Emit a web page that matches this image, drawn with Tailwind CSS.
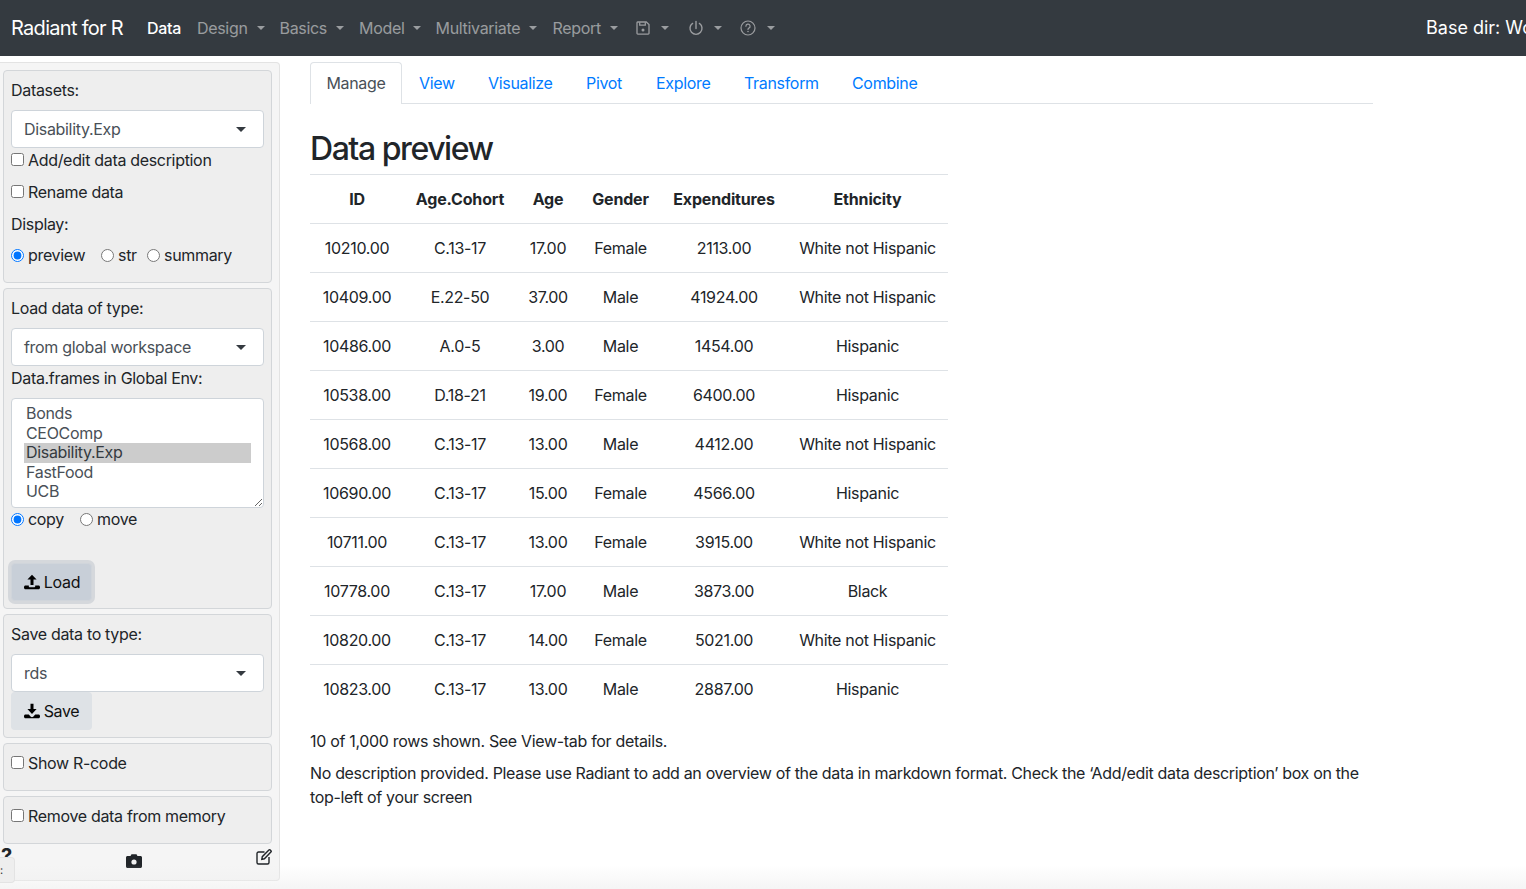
<!doctype html>
<html><head><meta charset="utf-8"><script src="https://cdn.jsdelivr.net/npm/@tailwindcss/browser@4"></script><title>Radiant for R</title></head>
<body class="w-[1526px] h-[889px] overflow-hidden bg-white text-[#212529] font-['Inter','Liberation_Sans',sans-serif] text-[16px] leading-6 tracking-[-0.32px] relative">
<nav class="h-14 bg-[#343a40] flex items-center pl-[11px] whitespace-nowrap overflow-hidden text-[16px] text-white/50">
  <span class="text-[20px] text-white w-[136px] tracking-[-0.7px]">Radiant for R</span>
  <span class="text-white font-medium w-[50px]">Data</span>
  <span class="flex items-center w-[82.5px]">Design<i class="ml-[9px] border-x-[4px] border-t-[4px] border-x-transparent border-t-white/50"></i></span>
  <span class="flex items-center w-[79.500px]">Basics<i class="ml-[9px] border-x-[4px] border-t-[4px] border-x-transparent border-t-white/50"></i></span>
  <span class="flex items-center w-[76.500px]">Model<i class="ml-[9px] border-x-[4px] border-t-[4px] border-x-transparent border-t-white/50"></i></span>
  <span class="flex items-center w-[117px]">Multivariate<i class="ml-[9px] border-x-[4px] border-t-[4px] border-x-transparent border-t-white/50"></i></span>
  <span class="flex items-center w-[83.500px]">Report<i class="ml-[9px] border-x-[4px] border-t-[4px] border-x-transparent border-t-white/50"></i></span>
  <span class="flex items-center w-[52px]"><svg class="w-[14px] h-4" viewBox="0 0 14 16" fill="none" stroke="#9a9c9f" stroke-width="1.3"><path d="M1.7 2h8.6L13 4.6v8.7a.8.8 0 0 1-.8.8H1.800a.8.8 0 0 1-.8-.8V2.800a.8.8 0 0 1 .7-.8z"/><path d="M3.700 2.200v3h5.600v-3"/><circle cx="7" cy="10" r="1.500" fill="#9a9c9f" stroke="none"/></svg><i class="ml-[11px] border-x-[4px] border-t-[4px] border-x-transparent border-t-white/50"></i></span>
  <span class="flex items-center w-[52px]"><svg class="w-4 h-4" viewBox="0 0 16 16" fill="none" stroke="#9a9c9f" stroke-width="1.400" stroke-linecap="round"><path d="M8 1.500v7"/><path d="M4.600 3.400a6 6 0 1 0 6.800 0"/></svg><i class="ml-[10px] border-x-[4px] border-t-[4px] border-x-transparent border-t-white/50"></i></span>
  <span class="flex items-center"><svg class="w-4 h-4" viewBox="0 0 16 16" fill="none" stroke="#9a9c9f" stroke-width="1.200"><circle cx="8" cy="8" r="7"/><path d="M5.900 6.200a2.100 2.100 0 1 1 3 1.900c-.6.300-.9.700-.9 1.400" stroke-linecap="round"/><circle cx="8" cy="11.500" r=".8" fill="#9a9c9f" stroke="none"/></svg><i class="ml-[11px] border-x-[4px] border-t-[4px] border-x-transparent border-t-white/50"></i></span>
  <span class="ml-auto text-[18px] text-white w-[100px] shrink-0 tracking-normal">Base dir: Workspace</span>
</nav>
<div class="flex items-start">
  <aside class="w-[280px] h-[819px] mt-[6px] shrink-0 bg-[#f5f5f5] border border-l-0 border-[#e3e3e3] rounded-r-[4px] pl-[3px] pr-[7px] pt-[7px] relative">
    <section class="h-[213px] bg-[#eeeeee] border border-[#d3d6d9] rounded-[4px] px-[7px] pt-[7px]">
      <p>Datasets:</p>
      <div class="mt-2 h-[38px] bg-white border border-[#ced4da] rounded-[4px] pl-3 pr-[17px] flex items-center justify-between text-[#495057]"><span>Disability.Exp</span><i class="border-x-[5px] border-t-[5px] border-x-transparent border-t-[#343a40]"></i></div>
      <label class="flex items-center gap-[4px] h-6"><input type="checkbox" class="w-[13px] h-[13px] -mt-[1px]">Add/edit data description</label>
      <label class="flex items-center gap-[4px] h-6 mt-2"><input type="checkbox" class="w-[13px] h-[13px] -mt-[1px]">Rename data</label>
      <p class="mt-2">Display:</p>
      <div class="flex items-center h-6 mt-[7px]">
        <label class="flex items-center gap-[4px] w-[90px]"><input type="radio" name="d" checked class="w-[13px] h-[13px]">preview</label>
        <label class="flex items-center gap-[4px] w-[46px]"><input type="radio" name="d" class="w-[13px] h-[13px]">str</label>
        <label class="flex items-center gap-[4px]"><input type="radio" name="d" class="w-[13px] h-[13px]">summary</label>
      </div>
    </section>
    <section class="mt-[5px] h-[321px] bg-[#eeeeee] border border-[#d3d6d9] rounded-[4px] px-[7px] pt-[7px]">
      <p>Load data of type:</p>
      <div class="mt-2 h-[38px] bg-white border border-[#ced4da] rounded-[4px] pl-3 pr-[17px] flex items-center justify-between text-[#495057]"><span>from global workspace</span><i class="border-x-[5px] border-t-[5px] border-x-transparent border-t-[#343a40]"></i></div>
      <p>Data.frames in Global Env:</p>
      <div class="relative mt-2 h-[110px] bg-white border border-[#ced4da] rounded-[4px] pl-3 pr-3 pt-[5.4px] text-[#495057] leading-[19.4px]">
        <p class="pl-[2px]">Bonds</p><p class="pl-[2px]">CEOComp</p><p class="pl-[2px] bg-[#cccccc] text-[#343a40]">Disability.Exp</p><p class="pl-[2px]">FastFood</p><p class="pl-[2px]">UCB</p>
        <svg class="absolute right-0 bottom-0 w-[9px] h-[9px]" viewBox="0 0 9 9" stroke="#666" stroke-width="1"><path d="M1 8 8 1M5 8l3-3"/></svg>
      </div>
      <div class="flex items-center h-6 -mt-[1px]">
        <label class="flex items-center gap-[4px] w-[69px]"><input type="radio" name="c" checked class="w-[13px] h-[13px]">copy</label>
        <label class="flex items-center gap-[4px]"><input type="radio" name="c" class="w-[13px] h-[13px]">move</label>
      </div>
      <button class="mt-8 w-[81px] h-[38px] pl-[1px] bg-[#c8cfd8] border border-[#d0d5db] rounded-[4px] ring-[3px] ring-[#d5d8dc] flex items-center justify-center gap-1 text-[#111]">
        <svg class="w-4 h-4" viewBox="0 0 16 16" fill="#000"><path d="M8 .8 12.600 5.600H9.500V11H6.500V5.600H3.400z"/><path d="M1.500 11.600h3.300v.6c0 .6.500 1 1 1h4.400c.5 0 1-.4 1-1v-.6h3.300c.8 0 1.500.7 1.500 1.500v.6c0 .8-.7 1.500-1.500 1.500H1.500C.7 15.200 0 14.500 0 13.700v-.6c0-.8.700-1.500 1.500-1.500z"/></svg>Load</button>
    </section>
    <section class="mt-[5px] h-[124px] bg-[#eeeeee] border border-[#d3d6d9] rounded-[4px] px-[7px] pt-[7px]">
      <p>Save data to type:</p>
      <div class="mt-2 h-[38px] bg-white border border-[#ced4da] rounded-[4px] pl-3 pr-[17px] flex items-center justify-between text-[#495057]"><span>rds</span><i class="border-x-[5px] border-t-[5px] border-x-transparent border-t-[#343a40]"></i></div>
      <button class="w-[81px] h-[38px] bg-[#dee2e6] rounded-[4px] flex items-center justify-center gap-1 text-[#111]">
        <svg class="w-4 h-4" viewBox="0 0 16 16" fill="#000"><path d="M6.500 .8h3V6h3.100L8 11 3.400 6h3.100z"/><path d="M1.500 11.600h3.300l2 2.100c.7.600 1.700.6 2.400 0l2-2.100h3.300c.8 0 1.500.7 1.500 1.500v.6c0 .8-.7 1.500-1.500 1.500H1.500C.7 15.200 0 14.500 0 13.700v-.6c0-.8.700-1.500 1.500-1.500z"/></svg>Save</button>
    </section>
    <section class="mt-[5px] h-[48px] bg-[#eeeeee] border border-[#d3d6d9] rounded-[4px] px-[7px] pt-[7px]">
      <label class="flex items-center gap-[4px] h-6"><input type="checkbox" class="w-[13px] h-[13px] -mt-[1px]">Show R-code</label>
    </section>
    <section class="mt-[5px] h-[48px] bg-[#eeeeee] border border-[#d3d6d9] rounded-[4px] px-[7px] pt-[7px]">
      <label class="flex items-center gap-[4px] h-6"><input type="checkbox" class="w-[13px] h-[13px] -mt-[1px]">Remove data from memory</label>
    </section>
    <svg class="absolute left-[126px] top-[791px] w-4 h-[14px]" viewBox="0 0 16 14" fill="#212529"><path d="M1.500 2H4.500L5.500.3h5L11.500 2h3c.8 0 1.500.7 1.500 1.500v9c0 .8-.7 1.500-1.500 1.500h-13C.7 14 0 13.300 0 12.500v-9C0 2.700.7 2 1.500 2z"/><circle cx="8" cy="8" r="2.600" fill="#f1f1f1"/></svg>
    <svg class="absolute left-[256px] top-[786px] w-4 h-4" viewBox="0 0 16 16" fill="none" stroke="#212529" stroke-width="1.400"><path d="M8.500 3H2.500A1.500 1.500 0 0 0 1 4.500v9A1.500 1.500 0 0 0 2.500 15h9a1.500 1.500 0 0 0 1.500-1.500V8"/><path d="M5.800 10.300 6.300 7.700 12.900 1.100a1 1 0 0 1 1.400 0l.6.600a1 1 0 0 1 0 1.400L8.400 9.800z"/></svg>
  </aside>
  <main class="ml-[30px] w-[1063px] mt-[6px]">
    <div class="flex h-[42px] border-b border-[#dee2e6] text-[#007bff]">
      <span class="h-[42px] w-[92px] pb-[2px] flex items-center justify-center bg-white border border-b-0 border-[#dee2e6] rounded-t-[4px] text-[#495057]">Manage</span>
      <span class="pl-[17px] pt-[9px] w-[69px]">View</span>
      <span class="pl-[17px] pt-[9px] w-[98px]">Visualize</span>
      <span class="pl-[17px] pt-[9px] w-[70px]">Pivot</span>
      <span class="pl-[17px] pt-[9px] w-[88px]">Explore</span>
      <span class="pl-[17px] pt-[9px] w-[108px]">Transform</span>
      <span class="pl-[17px] pt-[9px]">Combine</span>
    </div>
    <h4 class="text-[32px] font-medium leading-[38px] mt-[26px] mb-[6px] tracking-[-1.45px]">Data preview</h4>
    <table class="w-[638px] table-fixed border-collapse text-center">
      <colgroup><col class="w-[94px]"><col class="w-[112px]"><col class="w-[64px]"><col class="w-[81px]"><col class="w-[126px]"><col class="w-[161px]"></colgroup>
      <thead><tr class="h-[49px] border-y border-[#dee2e6] font-bold tracking-[-0.16px]"><th>ID</th><th>Age.Cohort</th><th>Age</th><th>Gender</th><th>Expenditures</th><th>Ethnicity</th></tr></thead>
      <tbody>
        <tr class="h-[49px] border-b border-[#dee2e6]"><td>10210.00</td><td>C.13-17</td><td>17.00</td><td>Female</td><td>2113.00</td><td>White not Hispanic</td></tr>
        <tr class="h-[49px] border-b border-[#dee2e6]"><td>10409.00</td><td>E.22-50</td><td>37.00</td><td>Male</td><td>41924.00</td><td>White not Hispanic</td></tr>
        <tr class="h-[49px] border-b border-[#dee2e6]"><td>10486.00</td><td>A.0-5</td><td>3.00</td><td>Male</td><td>1454.00</td><td>Hispanic</td></tr>
        <tr class="h-[49px] border-b border-[#dee2e6]"><td>10538.00</td><td>D.18-21</td><td>19.00</td><td>Female</td><td>6400.00</td><td>Hispanic</td></tr>
        <tr class="h-[49px] border-b border-[#dee2e6]"><td>10568.00</td><td>C.13-17</td><td>13.00</td><td>Male</td><td>4412.00</td><td>White not Hispanic</td></tr>
        <tr class="h-[49px] border-b border-[#dee2e6]"><td>10690.00</td><td>C.13-17</td><td>15.00</td><td>Female</td><td>4566.00</td><td>Hispanic</td></tr>
        <tr class="h-[49px] border-b border-[#dee2e6]"><td>10711.00</td><td>C.13-17</td><td>13.00</td><td>Female</td><td>3915.00</td><td>White not Hispanic</td></tr>
        <tr class="h-[49px] border-b border-[#dee2e6]"><td>10778.00</td><td>C.13-17</td><td>17.00</td><td>Male</td><td>3873.00</td><td>Black</td></tr>
        <tr class="h-[49px] border-b border-[#dee2e6]"><td>10820.00</td><td>C.13-17</td><td>14.00</td><td>Female</td><td>5021.00</td><td>White not Hispanic</td></tr>
        <tr class="h-[49px]"><td>10823.00</td><td>C.13-17</td><td>13.00</td><td>Male</td><td>2887.00</td><td>Hispanic</td></tr>
      </tbody>
    </table>
    <p class="mt-[15px]">10 of 1,000 rows shown. See View-tab for details.</p>
    <p class="mt-2 tracking-[-0.34px]">No description provided. Please use Radiant to add an overview of the data in markdown format. Check the ‘Add/edit data description’ box on the top-left of your screen</p>
  </main>
</div>
<div class="absolute left-0 right-0 bottom-0 h-6 bg-gradient-to-b from-transparent to-[#eeeeee]/60 pointer-events-none"></div>
<span class="absolute left-[1px] top-[844px] text-[20px] font-bold leading-6 text-[#212529]">?</span>
<div class="absolute left-0 top-[857px] w-[15px] h-[26px] bg-[#eeeeee] border border-l-0 border-[#e3e3e3] rounded-r-[4px] text-[11px] leading-6 text-[#333] overflow-hidden">:</div>
</body></html>
